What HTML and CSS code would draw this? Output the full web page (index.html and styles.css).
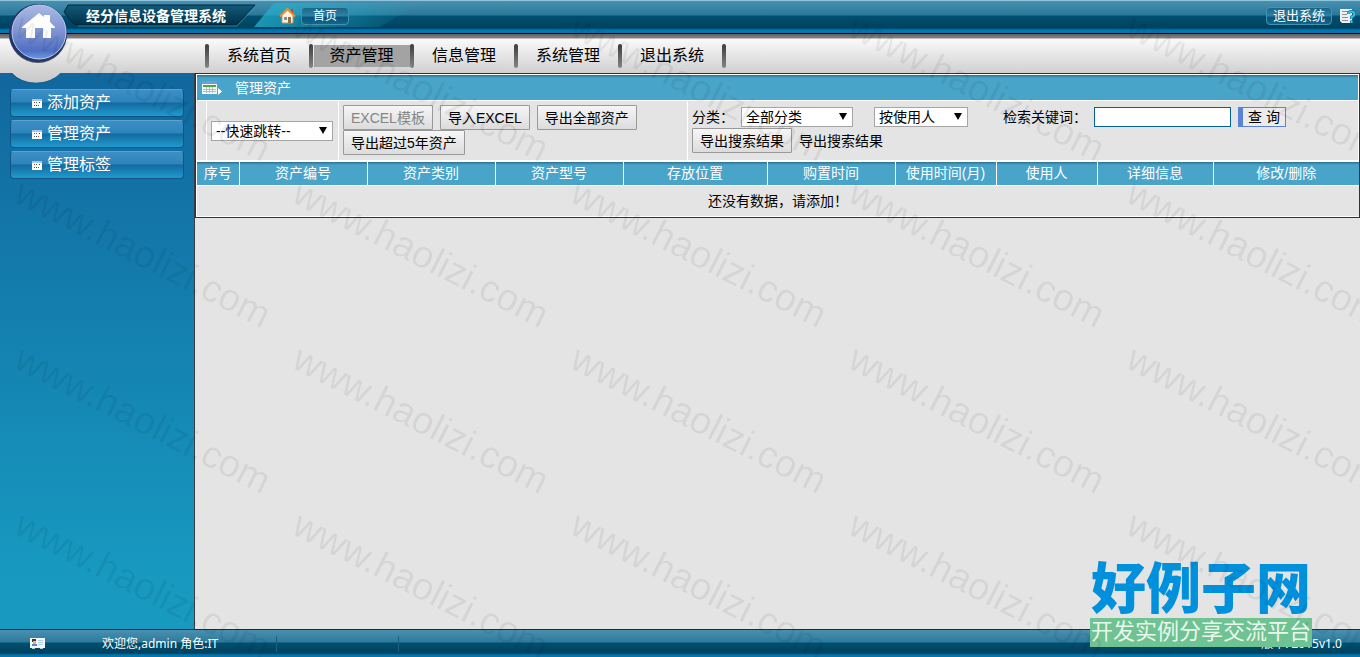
FILE: index.html
```html
<!DOCTYPE html>
<html lang="zh-CN">
<head>
<meta charset="utf-8">
<meta name="viewport" content="width=device-width, initial-scale=1">
<title>经分信息设备管理系统</title>
<link rel="stylesheet" href="styles.css">
</head>
<body>
<div class="page">
  <header class="topbar">
    <svg class="plate" width="430" height="33" viewBox="0 0 430 33" aria-hidden="true">
      <defs>
        <linearGradient id="glow" x1="0" x2="1" y1="0" y2="0">
          <stop offset="0" stop-color="#25b3cf" stop-opacity=".75"/>
          <stop offset="1" stop-color="#25b3cf" stop-opacity="0"/>
        </linearGradient>
        <linearGradient id="plateFill" x1="0" x2="0" y1="0" y2="1">
          <stop offset="0" stop-color="#135a78"/>
          <stop offset="1" stop-color="#003049"/>
        </linearGradient>
      </defs>
      <path d="M274 3H420L380 27H254Z" fill="url(#glow)"/>
      <path d="M68 5H255L236 25H78Q73 25 71 21L64 12Z" fill="url(#plateFill)" stroke="#00283b"/>
      <path d="M78 26H237L255 7" fill="none" stroke="#4295af" stroke-opacity=".7"/>
    </svg>
    <h1 class="title">经分信息设备管理系统</h1>
    <svg class="home-small" width="17" height="17" viewBox="0 0 17 17" aria-hidden="true">
      <path d="M3 8L8.500 3L14 8V16H3Z" fill="#faf3e0" stroke="#b59a72"/>
      <path d="M12 2h2v4h-2z" fill="#b5482d"/>
      <path d="M1 9.500L8.500 2L16 9.500" fill="none" stroke="#f08a2c" stroke-width="2"/>
      <path d="M9 10h3v6h-3z" fill="#9a6a40"/><path d="M5 10h3v3h-3z" fill="#7c8ea8"/>
    </svg>
    <a class="pill" href="#">首页</a>
    <a class="pill pill-exit" href="#">退出系统</a>
    <a class="help" href="#" aria-label="帮助">
      <svg width="16" height="16" viewBox="0 0 16 16" aria-hidden="true">
        <path d="M0 1H12V15H2L0 13Z" fill="#eef0f2"/>
        <path d="M2 3.500H9M2 6.500H7M2 9.500H8M2 12.500H8" stroke="#8b8f96"/>
        <path d="M8.500 6Q8.500 3.500 11.500 3.500Q14.500 3.500 14.500 6Q14.500 8 11.500 9V11M11.500 12.500V15" fill="none" stroke="#0b5a7c" stroke-width="3"/>
        <path d="M8.500 6Q8.500 3.500 11.500 3.500Q14.500 3.500 14.500 6Q14.500 8 11.500 9V11M11.500 12.500V15" fill="none" stroke="#35c2ea" stroke-width="2"/>
      </svg>
    </a>
  </header>

  <nav class="menu" aria-label="主菜单">
    <a href="#">系统首页</a>
    <a href="#" class="active">资产管理</a>
    <a href="#">信息管理</a>
    <a href="#">系统管理</a>
    <a href="#">退出系统</a>
  </nav>

  <a class="orb" href="#" aria-label="首页">
    <svg width="76" height="86" viewBox="0 0 76 86" aria-hidden="true">
      <defs>
        <linearGradient id="orbFill" x1="0" x2="0" y1="0" y2="1">
          <stop offset="0" stop-color="#a9b8e4"/>
          <stop offset=".5" stop-color="#7d92d0"/>
          <stop offset=".85" stop-color="#4f6fc4"/>
          <stop offset="1" stop-color="#6e9ae6"/>
        </linearGradient>
        <linearGradient id="bulge" x1="0" x2="0" y1="0" y2="1">
          <stop offset="0" stop-color="#d2d2d2"/>
          <stop offset="1" stop-color="#c8c8c8"/>
        </linearGradient>
      </defs>
      <path d="M11 72Q21 83 36 83Q51 83 62 72Z" fill="url(#bulge)"/>
      <path d="M11 73Q21 83 36 83Q51 83 61 73" fill="none" stroke="#0b4d76" stroke-opacity=".5"/>
      <circle cx="38" cy="34" r="29" fill="#55575c"/>
      <circle cx="38" cy="33" r="29" fill="#23366f"/>
      <circle cx="39" cy="32" r="27" fill="url(#orbFill)" stroke="#c0cbec"/>
      <path d="M22 27L39 13L44 17V15H50V22L55 27V28H51V38H43V28H35V38H26V28H22Z" fill="#fff"/>
    </svg>
  </a>

  <div class="body">
    <aside class="side">
      <a href="#"><svg width="10" height="9" viewBox="0 0 10 9" aria-hidden="true"><path d="M0 0H10V9H0Z" fill="#fff"/><path d="M0 0H10V2H0Z" fill="#a9c6e4"/><path d="M2 3h1v1h-1zM6 6h1v1h-1z" fill="#b33"/><path d="M4 3h1v1h-1zM2 6h1v1h-1z" fill="#274"/><path d="M7 3h1v1h-1zM4 6h1v1h-1z" fill="#247"/></svg>添加资产</a>
      <a href="#"><svg width="10" height="9" viewBox="0 0 10 9" aria-hidden="true"><path d="M0 0H10V9H0Z" fill="#fff"/><path d="M0 0H10V2H0Z" fill="#a9c6e4"/><path d="M2 3h1v1h-1zM6 6h1v1h-1z" fill="#b33"/><path d="M4 3h1v1h-1zM2 6h1v1h-1z" fill="#274"/><path d="M7 3h1v1h-1zM4 6h1v1h-1z" fill="#247"/></svg>管理资产</a>
      <a href="#"><svg width="10" height="9" viewBox="0 0 10 9" aria-hidden="true"><path d="M0 0H10V9H0Z" fill="#fff"/><path d="M0 0H10V2H0Z" fill="#a9c6e4"/><path d="M2 3h1v1h-1zM6 6h1v1h-1z" fill="#b33"/><path d="M4 3h1v1h-1zM2 6h1v1h-1z" fill="#274"/><path d="M7 3h1v1h-1zM4 6h1v1h-1z" fill="#247"/></svg>管理标签</a>
    </aside>

    <main class="main">
      <section class="panel">
        <h2 class="bar">
          <svg width="20" height="14" viewBox="0 0 20 14" aria-hidden="true">
            <path d="M0 0H15V13H0Z" fill="#f4f8fb"/><path d="M0 0H15V3H0Z" fill="#6d9ed6"/>
            <path d="M1 4H14V6H1Z" fill="#4fa83f"/>
            <path d="M1 8.500H14M1 10.500H14M4.500 6V12M7.500 6V12M10.500 6V12" stroke="#b3bcc4"/>
            <path d="M16 7L20 10.500L16 14Z" fill="#fff"/>
          </svg>管理资产
        </h2>
        <div class="tools">
          <div class="cell"></div>
          <div class="cell jump">
            <span class="drop drop-jump"><select aria-label="快速跳转"><option>--快速跳转--</option></select></span>
          </div>
          <div class="cell buttons">
            <button class="btn" type="button" disabled>EXCEL模板</button>
            <button class="btn" type="button">导入EXCEL</button>
            <button class="btn" type="button">导出全部资产</button>
            <button class="btn" type="button">导出超过5年资产</button>
          </div>
          <form class="cell search">
            <div class="line">
              <label for="kind">分类：</label>
              <span class="drop drop-kind"><select id="kind"><option>全部分类</option></select></span>
              <span class="drop drop-by"><select aria-label="检索方式"><option>按使用人</option></select></span>
              <label for="key">检索关键词：</label>
              <input id="key" class="key" type="text">
              <button class="query" type="button">查 询</button>
            </div>
            <div class="line">
              <button class="btn" type="button">导出搜索结果</button>
              <span>导出搜索结果</span>
            </div>
          </form>
        </div>
        <table class="list">
          <colgroup>
            <col class="c-no"><col class="c-mid"><col class="c-mid"><col class="c-mid"><col class="c-place">
            <col class="c-mid"><col class="c-short"><col class="c-short"><col class="c-info"><col class="c-edit">
          </colgroup>
          <thead>
            <tr><th>序号</th><th>资产编号</th><th>资产类别</th><th>资产型号</th><th>存放位置</th><th>购置时间</th><th>使用时间(月)</th><th>使用人</th><th>详细信息</th><th>修改/删除</th></tr>
          </thead>
          <tbody>
            <tr><td colspan="10">还没有数据，请添加！</td></tr>
          </tbody>
        </table>
      </section>
    </main>
  </div>

  <footer class="foot">
    <svg width="15" height="12" viewBox="0 0 15 12" aria-hidden="true">
      <path d="M0 0H15V10H0Z" fill="#f2f7fb"/><path d="M2 1H6V4H2Z" fill="#4a3423"/>
      <path d="M3 3H6V6H3Z" fill="#f0b070"/><path d="M2 6H7V8H2Z" fill="#5a88c4"/>
      <path d="M8 2.500H13M8 4.500H13M8 6.500H13" stroke="#b3cbe2"/><path d="M2 10h3v1h-3zM10 10h3v1h-3z" fill="#b9cfe0"/>
    </svg>
    <span class="welcome">欢迎您,admin 角色:IT</span>
    <span class="slot"></span>
    <span class="version">版本: 2015v1.0</span>
  </footer>

  <div class="brand">
    <strong>好例子网</strong>
    <span>开发实例分享交流平台</span>
  </div>

  <div class="marks" aria-hidden="true">
    <span>www.haolizi.com</span><span>www.haolizi.com</span><span>www.haolizi.com</span><span>www.haolizi.com</span><span>www.haolizi.com</span>
    <span>www.haolizi.com</span><span>www.haolizi.com</span><span>www.haolizi.com</span><span>www.haolizi.com</span><span>www.haolizi.com</span>
    <span>www.haolizi.com</span><span>www.haolizi.com</span><span>www.haolizi.com</span><span>www.haolizi.com</span><span>www.haolizi.com</span>
    <span>www.haolizi.com</span><span>www.haolizi.com</span><span>www.haolizi.com</span><span>www.haolizi.com</span><span>www.haolizi.com</span>
  </div>
</div>
</body>
</html>
```
FILE: styles.css
```css
* { box-sizing: border-box; }
body {
  margin: 0;
  background: #e4e4e4;
  color: #000;
  font: 14px/20px "Liberation Sans", "Noto Sans CJK SC", sans-serif;
}
a { color: inherit; text-decoration: none; }
svg { display: block; flex: none; }
button, select, input { font: inherit; color: inherit; margin: 0; }

.page {
  position: relative;
  display: flex;
  flex-direction: column;
  min-height: 100vh;
  overflow: hidden;
}

/* top bar */
.topbar {
  position: relative;
  display: flex;
  align-items: center;
  height: 34px;
  padding: 0 4px 3px 86px;
  color: #fff;
  border-top: 1px solid #8fc6dc;
  border-bottom: 1px solid #000;
  background: linear-gradient(#4a90b0, #2a7899 14px, #004f70 15px, #00425f 27px, #0077b0 29px, #0077b0);
}
.plate { position: absolute; left: 0; top: -1px; }
.title {
  position: relative;
  margin: 0 53px 0 0;
  font-size: 14px;
  font-weight: 700;
  white-space: nowrap;
}
.home-small { position: relative; margin-right: 5px; }
.pill {
  position: relative;
  padding: 0 11px;
  font-size: 12px;
  line-height: 16px;
  border: 1px solid #4193b4;
  border-radius: 4px;
  background: linear-gradient(#1e6585, #2b83a8 8px, #0a5477 9px, #11658b);
}
.pill-exit { margin-left: auto; margin-right: 8px; padding: 0 6px; font-size: 13px; }
.help { position: relative; }

/* main menu */
.menu {
  display: flex;
  align-items: center;
  height: 39px;
  padding: 4px 0 0 205px;
  font-size: 16px;
  background: linear-gradient(#5f5f5f, #848484 4px, #fafafa 5px, #d0d0d0);
}
.menu a {
  width: 104px;
  padding-left: 4px;
  line-height: 22px;
  text-align: center;
  position: relative;
}
.menu a::before, .menu a:last-child::after {
  content: "";
  position: absolute;
  left: 0;
  top: -1px;
  width: 4px;
  height: 24px;
  border-radius: 2px;
  background: linear-gradient(#3d3d3d, #858585);
}
.menu a:last-child::after { left: 100%; }
.menu .active {
  width: 101px;
  background: linear-gradient(#a3a3a3, #a3a3a3) no-repeat 5px 0;
}

.orb { position: absolute; left: 0; top: 0; z-index: 2; }

/* side menu and content */
.body { display: flex; flex: 1; }
.side {
  display: flex;
  flex-direction: column;
  gap: 3px;
  width: 195px;
  padding: 16px 10px 0 10px;
  border-right: 1px solid #3c3c44;
  background: linear-gradient(#11679e, #1799c0 90%);
}
.side a {
  display: flex;
  align-items: center;
  gap: 5px;
  height: 28px;
  padding-left: 21px;
  color: #fff;
  font-size: 16px;
  border: 1px solid #0d5685;
  border-top-color: #5aa3cf;
  border-radius: 4px;
  background: linear-gradient(#3c8fc6, #2d84ba 12px, #14699f 13px, #1f9bcf);
}
.main { flex: 1; min-width: 0; }

.panel {
  padding: 1px;
  border: 1px solid #1c2f7c;
  background: #fff;
}
.bar {
  display: flex;
  align-items: center;
  gap: 13px;
  height: 25px;
  margin: 0;
  padding-left: 5px;
  color: #fff;
  font-size: 14px;
  font-weight: 400;
  background: linear-gradient(#2f6f8d, #49a4ca 3px);
}

.tools {
  display: grid;
  grid-template-columns: 9px 131px 348px 1fr;
  gap: 1px;
  padding: 1px 0 2px;
}
.cell { min-height: 59px; background: #e4e4e4; }
.jump { padding: 20px 4px 0; }
.buttons {
  display: flex;
  flex-wrap: wrap;
  align-content: flex-start;
  column-gap: 7px;
  padding: 4px 40px 4px 4px;
}
.btn {
  height: 25px;
  padding: 0 7px;
  line-height: 22px;
  white-space: nowrap;
  border: 1px solid #999;
  border-radius: 1px;
  background: linear-gradient(#f6f6f6, #dcdcdc);
}
.btn:disabled { color: #858585; }

.search {
  display: flex;
  flex-direction: column;
  gap: 1px;
  padding: 6px 4px 0;
}
.line { display: flex; align-items: center; white-space: nowrap; column-gap: 7px; }
.drop {
  position: relative;
  display: block;
  height: 20px;
}
.drop select {
  display: block;
  width: 100%;
  height: 100%;
  padding: 0 4px;
  line-height: 18px;
  appearance: none;
  border: 1px solid #a5a5a5;
  border-radius: 0;
  background: #fff;
}
.drop::after {
  content: "";
  position: absolute;
  right: 6px;
  top: 6px;
  border: 4px solid transparent;
  border-top: 7px solid #000;
  border-bottom: 0;
  pointer-events: none;
}
.drop-jump { width: 122px; }
.drop-kind { width: 112px; }
.drop-by { width: 94px; margin: 0 28px 0 14px; }
.key {
  width: 137px;
  height: 20px;
  border: 1px solid #00619b;
  background: #fff;
}
.query {
  width: 48px;
  height: 20px;
  padding: 0;
  line-height: 18px;
  border: 1px solid #5a82d8;
  border-left-width: 5px;
  background: #ececec;
}

.list {
  width: 100%;
  table-layout: fixed;
  border-collapse: collapse;
}
.c-no { width: 42px; }
.c-mid { width: 128px; }
.c-place { width: 144px; }
.c-short { width: 101px; }
.c-info { width: 116px; }
.c-edit { width: 146px; }
.list th {
  height: 23px;
  padding: 0;
  color: #fff;
  font-weight: 400;
  line-height: 22px;
  border-left: 1px solid #fff;
  background: linear-gradient(#2f6f8d, #49a4ca 3px);
}
.list th:first-child { border-left: 0; }
.list td {
  height: 31px;
  padding: 0;
  text-align: center;
  border-top: 1px solid #fff;
  background: #e4e4e4;
}

/* status bar */
.foot {
  display: flex;
  align-items: center;
  height: 28px;
  padding: 0 18px 0 30px;
  color: #fff;
  font-size: 12px;
  font-family: "Noto Sans", "Noto Sans CJK SC", sans-serif;
  border-top: 1px solid #10303c;
  background: linear-gradient(#4a90b0, #2d7a9c 12px, #004f70 13px, #00425f 23px, #0077b0 25px, #0077b0);
}
.welcome { width: 174px; margin-left: 57px; }
.slot {
  width: 123px;
  height: 16px;
  border: 1px solid #1d5f7e;
  border-width: 0 1px;
}
.version { margin-left: auto; }

/* overlays */
.brand {
  position: absolute;
  right: 48px;
  bottom: 10px;
  width: 222px;
  text-align: center;
  white-space: nowrap;
}
.brand strong {
  display: block;
  padding-bottom: 6px;
  color: #0090dc;
  font: 900 55px/56px "Noto Sans CJK SC", sans-serif;
}
.brand span {
  display: block;
  height: 29px;
  color: #e9f8ee;
  font-size: 22px;
  line-height: 27px;
  background: #6fc291;
}
.marks {
  position: absolute;
  inset: 0;
  z-index: 3;
  display: grid;
  grid-template-columns: repeat(5, 278px);
  grid-auto-rows: 166px;
  padding: 0 0 0 12px;
  overflow: hidden;
  pointer-events: none;
  color: rgba(0, 0, 0, .07);
  font-size: 38px;
  line-height: 44px;
}
.marks span {
  height: 44px;
  transform: rotate(27deg);
  transform-origin: 0 35px;
}
```
